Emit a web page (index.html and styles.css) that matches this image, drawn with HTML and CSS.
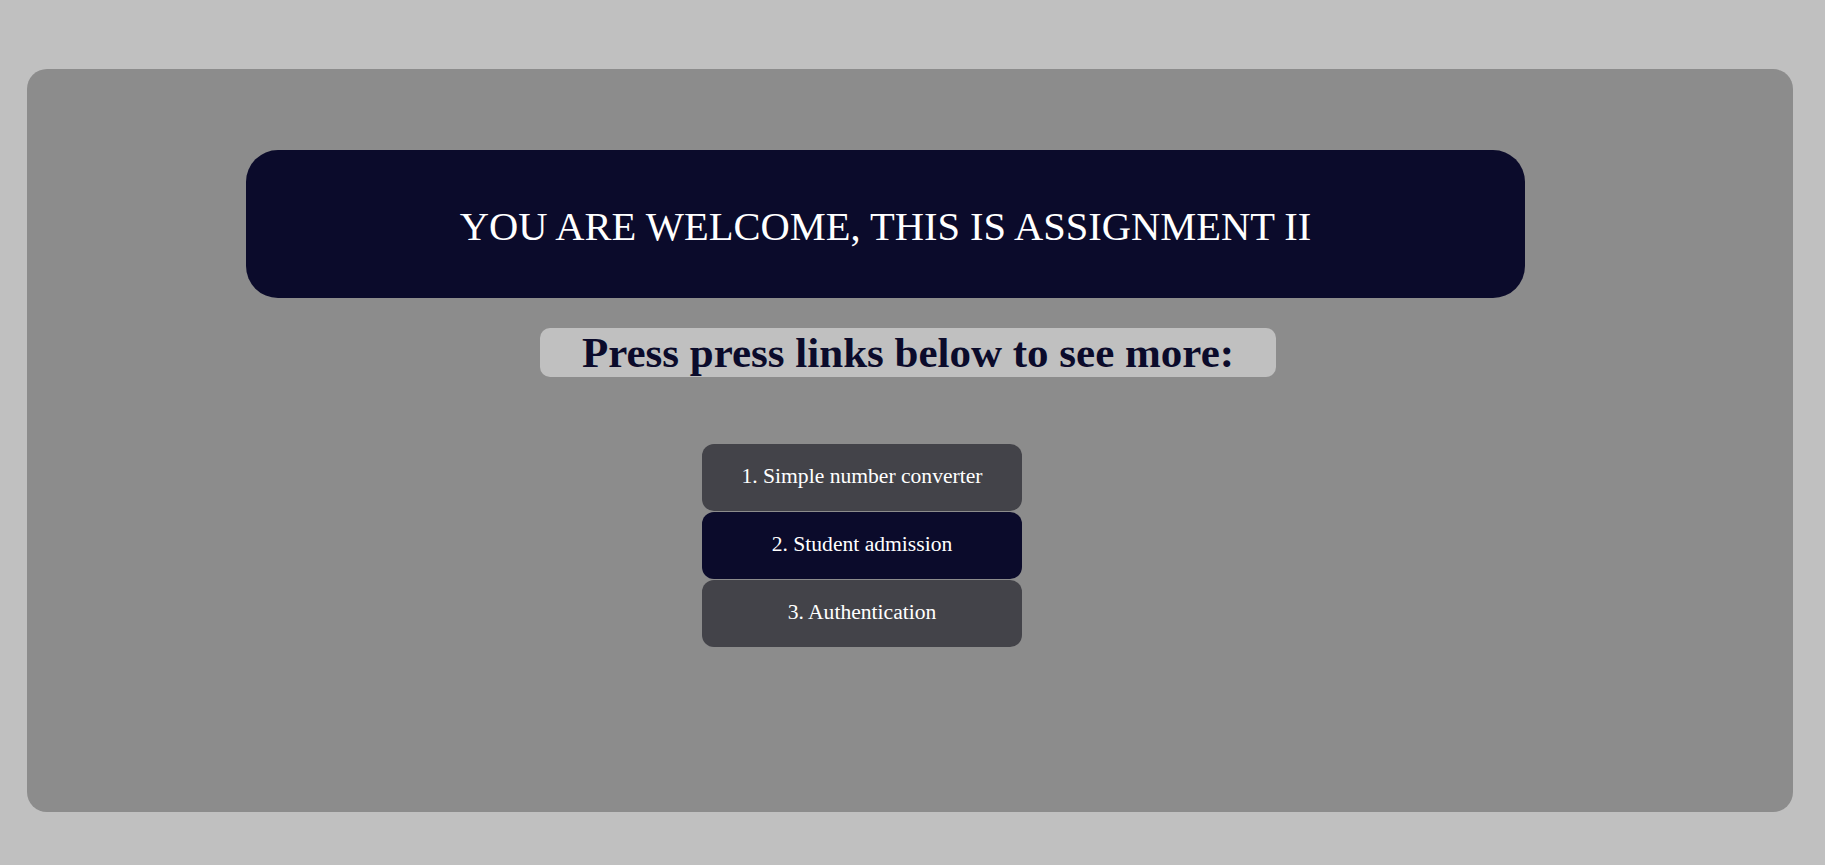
FILE: index.html
```html
<!DOCTYPE html>
<html lang="en">
<head>
<meta charset="utf-8">
<title>Assignment II</title>
<link rel="stylesheet" href="styles.css">
</head>
<body>
<div class="panel">
  <header class="banner">
    <h1 class="banner-title">YOU ARE WELCOME, THIS IS ASSIGNMENT II</h1>
  </header>
  <h2 class="prompt">Press press links below to see more:</h2>
  <nav class="links">
    <a class="link link-gray" href="#">1. Simple number converter</a>
    <a class="link link-navy" href="#">2. Student admission</a>
    <a class="link link-gray" href="#">3. Authentication</a>
  </nav>
</div>
</body>
</html>
```

FILE: styles.css
```css
html, body {
  margin: 0;
  padding: 0;
}

body {
  background: #c0c0c0;
  font-family: "Liberation Serif", "Times New Roman", serif;
  padding: 69px 0 0 27px;
  height: 865px;
  box-sizing: border-box;
  overflow: hidden;
}

.panel {
  width: 1766px;
  height: 743px;
  box-sizing: border-box;
  background: #8c8c8c;
  border-radius: 20px;
  padding-top: 81px;
  display: flex;
  flex-direction: column;
  align-items: flex-start;
}

.banner {
  margin-left: 219px;
  width: 1279px;
  height: 148px;
  box-sizing: border-box;
  background: #0b0b2b;
  border-radius: 32px;
  display: flex;
  align-items: center;
  justify-content: center;
}

.banner-title {
  margin: 0;
  font-weight: normal;
  font-size: 40.5px;
  line-height: 46px;
  color: #ffffff;
  padding-top: 5px;
}

.prompt {
  margin: 30px 0 0 513px;
  width: 736px;
  height: 49px;
  box-sizing: border-box;
  background: #c0c0c0;
  border-radius: 10px;
  color: #0b0b2b;
  font-size: 43px;
  font-weight: bold;
  line-height: 49px;
  text-align: center;
}

.links {
  margin: 67px 0 0 675px;
  width: 320px;
  display: flex;
  flex-direction: column;
  gap: 1px;
}

.link {
  height: 67px;
  border-radius: 12px;
  display: flex;
  align-items: center;
  justify-content: center;
  color: #ffffff;
  text-decoration: none;
  font-size: 21.6px;
  padding-bottom: 2px;
  box-sizing: border-box;
}

.link-gray {
  background: #434349;
}

.link-navy {
  background: #0b0b2b;
}
```
